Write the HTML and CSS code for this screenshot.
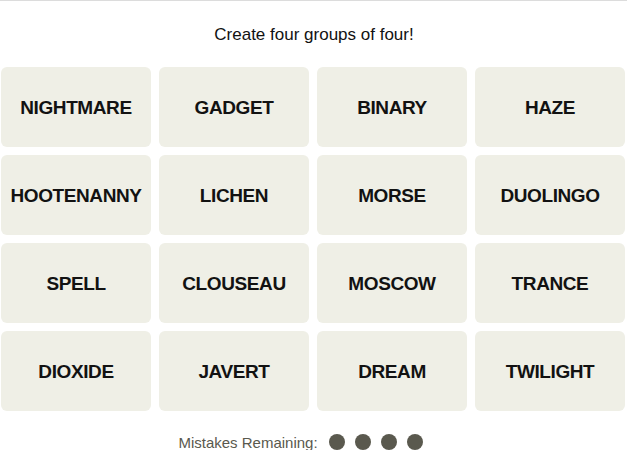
FILE: index.html
```html
<!DOCTYPE html>
<html lang="en">
<head>
<meta charset="utf-8">
<title>Connections</title>
<link rel="stylesheet" href="styles.css">
</head>
<body>
<main class="game">
  <p class="subtitle">Create four groups of four!</p>
  <div class="board">
    <div class="tile">NIGHTMARE</div>
    <div class="tile">GADGET</div>
    <div class="tile">BINARY</div>
    <div class="tile">HAZE</div>
    <div class="tile">HOOTENANNY</div>
    <div class="tile">LICHEN</div>
    <div class="tile">MORSE</div>
    <div class="tile">DUOLINGO</div>
    <div class="tile">SPELL</div>
    <div class="tile">CLOUSEAU</div>
    <div class="tile">MOSCOW</div>
    <div class="tile">TRANCE</div>
    <div class="tile">DIOXIDE</div>
    <div class="tile">JAVERT</div>
    <div class="tile">DREAM</div>
    <div class="tile">TWILIGHT</div>
  </div>
  <div class="mistakes">
    <span class="mistakes-label">Mistakes Remaining:</span>
    <span class="dots">
      <span class="dot"></span>
      <span class="dot"></span>
      <span class="dot"></span>
      <span class="dot"></span>
    </span>
  </div>
</main>
</body>
</html>
```
FILE: styles.css
```css
* { box-sizing: border-box; }
html, body { margin: 0; padding: 0; background: #fff; }
body {
  border-top: 1px solid #dcdcdc;
  font-family: "Liberation Sans", Arial, sans-serif;
  color: #121212;
}
.game {
  display: flex;
  flex-direction: column;
  padding-left: 1px;
}
.subtitle {
  margin: 0;
  padding-top: 24px;
  line-height: 20px;
  font-size: 17px;
  text-align: center;
  color: #121212;
}
.board {
  margin-top: 22px;
  display: grid;
  grid-template-columns: repeat(4, 150px);
  grid-auto-rows: 80px;
  gap: 8px;
}
.tile {
  background: #efefe6;
  border-radius: 6px;
  display: flex;
  align-items: center;
  justify-content: center;
  padding-top: 1px;
  font-weight: 700;
  font-size: 19px;
  letter-spacing: -0.4px;
  color: #121212;
}
.mistakes {
  margin-top: 23px;
  display: flex;
  align-items: center;
  justify-content: center;
  padding-right: 27px;
  height: 16px;
}
.mistakes-label {
  font-size: 15px;
  color: #5a594e;
  margin-right: 11px;
}
.dots { display: flex; gap: 10px; }
.dot {
  width: 16px;
  height: 16px;
  border-radius: 50%;
  background: #5a594e;
}
```
